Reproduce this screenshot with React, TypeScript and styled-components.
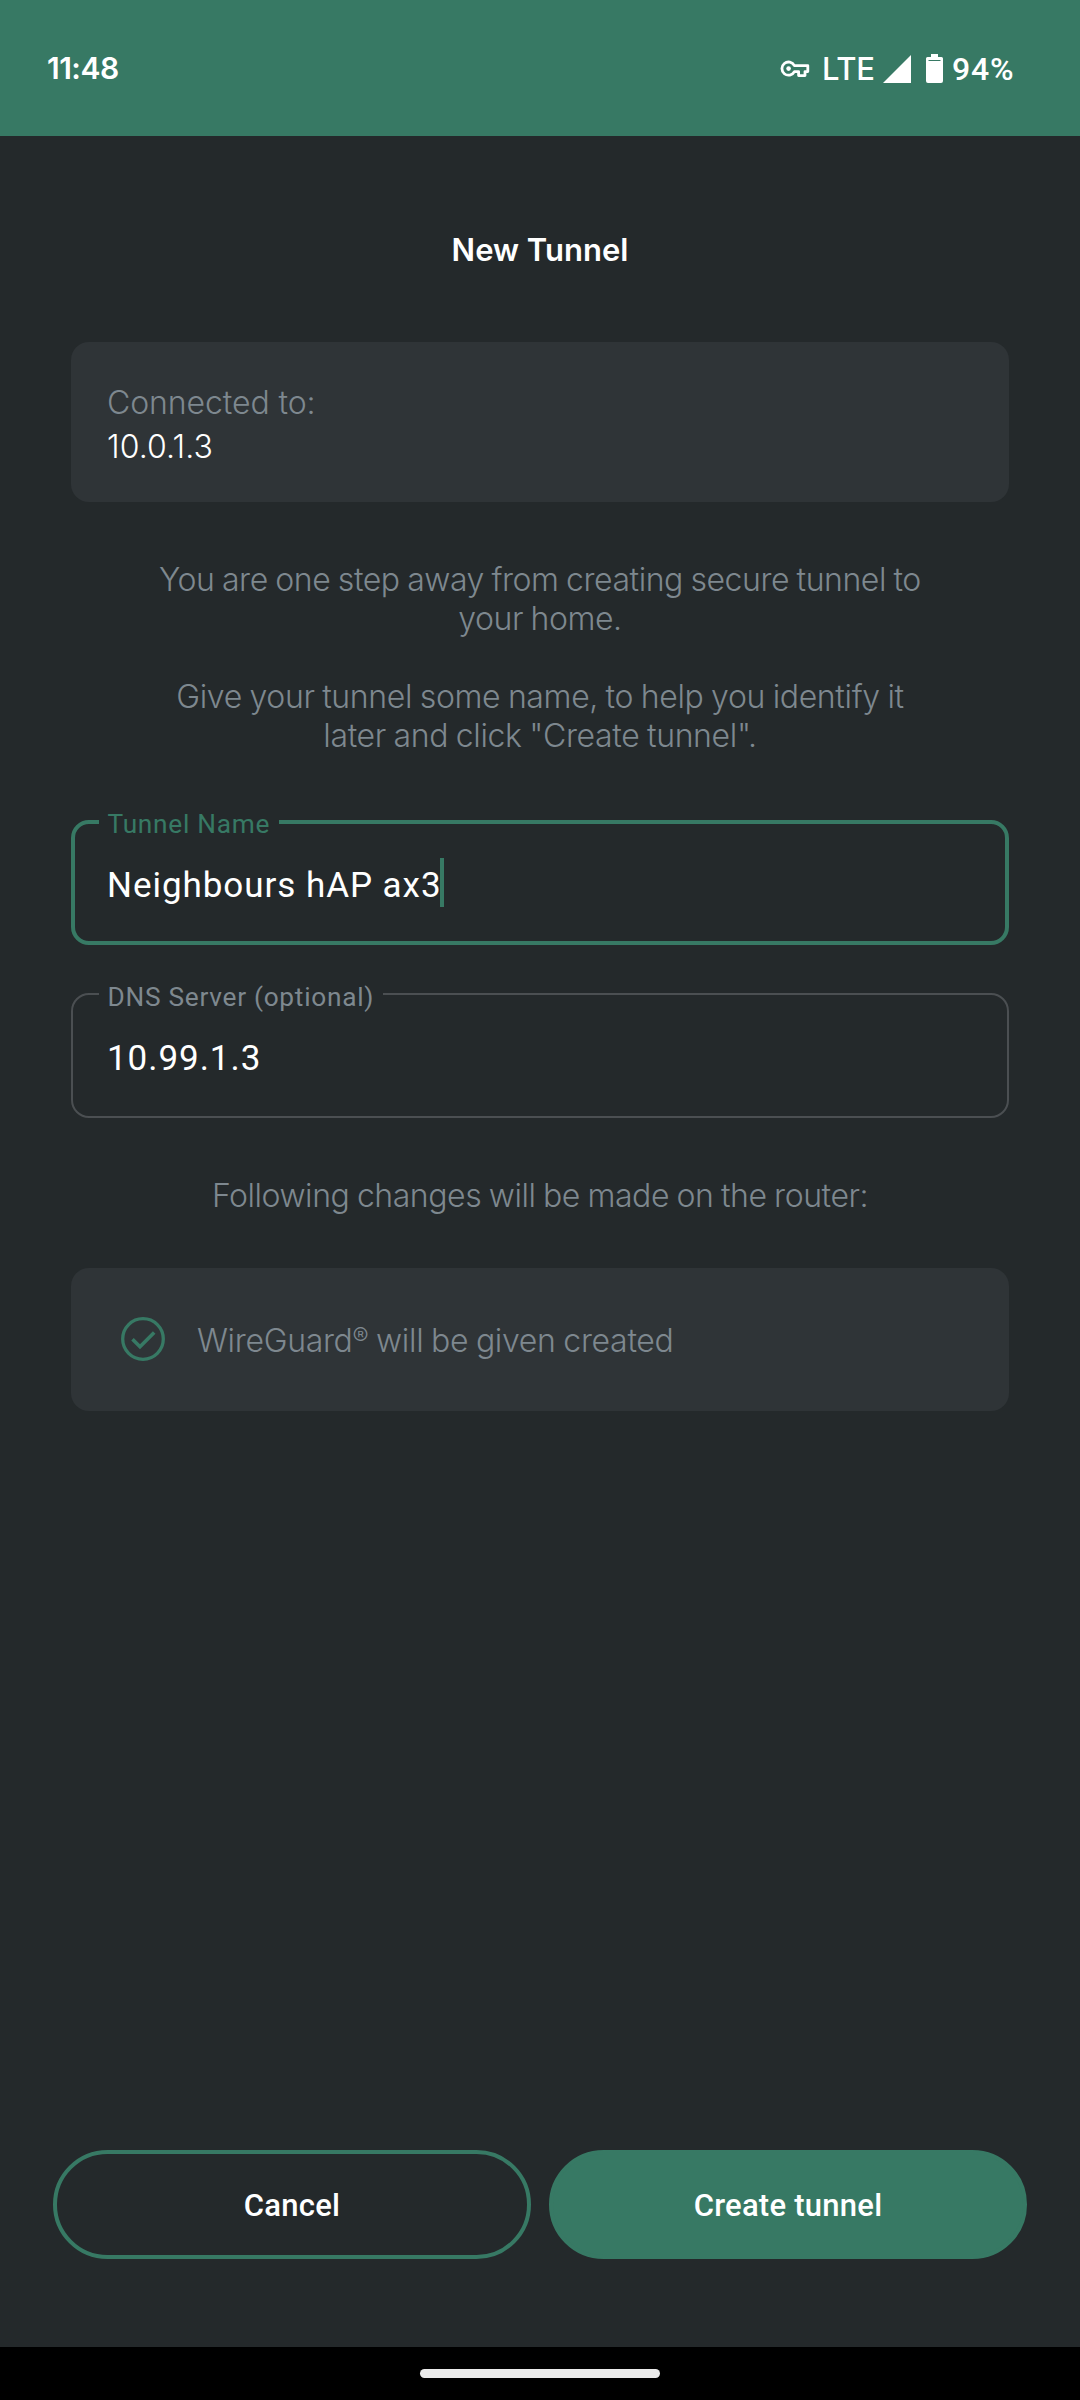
import React from "react";
import styled, { createGlobalStyle } from "styled-components";

const green = "#377964";
const surface = "#24292b";
const card = "#2f3437";
const muted = "#7e888f";

const GlobalStyle = createGlobalStyle`
  * { box-sizing: border-box; }
  body { margin: 0; background: ${surface}; }
`;

const Screen = styled.div`
  width: 1080px;
  height: 2400px;
  display: flex;
  flex-direction: column;
  background: ${surface};
  color: #fff;
  font-family: Inter, "Liberation Sans", sans-serif;
  overflow: hidden;
`;

const StatusBar = styled.header`
  height: 136px;
  padding: 48px 65px 0 47px;
  display: flex;
  justify-content: space-between;
  align-items: flex-start;
  background: ${green};
  line-height: 40px;
`;

const Clock = styled.span`
  font-size: 30px;
  font-weight: 560;
  letter-spacing: -0.5px;
`;

const StatusIcons = styled.div`
  display: flex;
  height: 40px;
  align-items: center;
`;

const KeySvg = styled.svg`
  width: 30px;
  height: 18px;
  margin: 2px 12px 0 0;
`;

const Network = styled.span`
  width: 51px;
  margin-right: 10px;
  padding-top: 1px;
  font-size: 31px;
  font-weight: 500;
  letter-spacing: -0.3px;
`;

const SignalSvg = styled.svg`
  width: 28px;
  height: 28px;
  margin-right: 15px;
  margin-top: 1px;
`;

const BatterySvg = styled.svg`
  width: 17px;
  height: 29px;
  margin-right: 9px;
  margin-top: 1px;
`;

const Percent = styled.span`
  width: 63px;
  padding-top: 1px;
  font-family: Roboto, sans-serif;
  font-size: 32px;
  font-weight: 500;
  letter-spacing: 0.8px;
`;

const Content = styled.main`
  flex: 1;
  display: flex;
  flex-direction: column;
  padding: 94px 71px 0;
`;

const Title = styled.h1`
  margin: 0 0 72px;
  font-size: 31px;
  font-weight: 600;
  line-height: 40px;
  text-align: center;
`;

const InfoCard = styled.section`
  height: 160px;
  padding: 39px 36px 0;
  border-radius: 18px;
  background: ${card};
`;

const InfoLine = styled.div<{ $muted?: boolean }>`
  font-size: 32px;
  font-weight: 350;
  line-height: 44px;
  letter-spacing: ${(p) => (p.$muted ? -0.1 : 0.1)}px;
  color: ${(p) => (p.$muted ? muted : "#fff")};
`;

const Copy = styled.p<{ $tracking?: number }>`
  margin: 0;
  font-size: 32px;
  font-weight: 350;
  line-height: 38.9px;
  letter-spacing: ${(p) => p.$tracking ?? -0.45}px;
  word-spacing: -1px;
  text-align: center;
  color: ${muted};
`;

const Registered = styled.span`
  position: relative;
  top: -7px;
  font-size: 24px;
  line-height: 1;
`;

const Intro = styled.div`
  display: flex;
  flex-direction: column;
  gap: 38.9px;
  margin: 59px 0 64.5px;
`;

const Field = styled.div<{ $active?: boolean }>`
  position: relative;
  height: 125px;
  display: flex;
  align-items: flex-start;
  padding: ${(p) => (p.$active ? "40px 32px" : "42px 34px")};
  border: ${(p) => (p.$active ? `4px solid ${green}` : "2px solid #4b4f52")};
  border-radius: 18px;
  font-family: Roboto, sans-serif;
`;

const FieldLabel = styled.label<{ $active?: boolean }>`
  position: absolute;
  top: ${(p) => (p.$active ? -15 : -13)}px;
  left: ${(p) => (p.$active ? 24 : 26)}px;
  padding: 0 8.5px;
  background: ${surface};
  color: ${(p) => (p.$active ? green : muted)};
  font-size: 26.25px;
  line-height: 30px;
  letter-spacing: 0.72px;
  white-space: nowrap;
`;

const FieldValue = styled.span`
  font-size: 35px;
  line-height: 44px;
  letter-spacing: 0.95px;
  white-space: nowrap;
`;

const Caret = styled.span`
  width: 4px;
  height: 49px;
  margin: -6px 0 0 -2px;
  background: ${green};
`;

const Fields = styled.div`
  display: flex;
  flex-direction: column;
  gap: 48px;
  margin-bottom: 59px;
`;

const ChangeCard = styled.section`
  height: 143px;
  margin-top: 52px;
  padding: 0 49.5px;
  display: flex;
  align-items: center;
  gap: 32.5px;
  border-radius: 18px;
  background: ${card};
`;

const ChangeText = styled(Copy)`
  padding-top: 5px;
`;

const CheckSvg = styled.svg`
  width: 44px;
  height: 44px;
`;

const Actions = styled.footer`
  height: 197px;
  padding: 0 53px;
  display: grid;
  grid-template-columns: 1fr 1fr;
  gap: 18px;
  align-items: start;
`;

const Button = styled.button<{ $filled?: boolean }>`
  height: 109px;
  padding: 2px 0 0;
  border: 4px solid ${green};
  border-radius: 55px;
  background: ${(p) => (p.$filled ? green : "transparent")};
  color: #fff;
  font: 500 31px/36px Roboto, sans-serif;
  letter-spacing: 0.25px;
`;

const NavBar = styled.div`
  height: 53px;
  display: flex;
  justify-content: center;
  padding-top: 22px;
  background: #000;
`;

const NavPill = styled.div`
  width: 240px;
  height: 9px;
  border-radius: 5px;
  background: #ebebeb;
`;

export default function App() {
  return (
    <>
      <GlobalStyle />
      <Screen>
        <StatusBar>
          <Clock>11:48</Clock>
          <StatusIcons>
            <KeySvg viewBox="0 0 30 18" fill="none" stroke="#fff">
              <path
                d="M14.4 5.6H27.8V11.6H25V15.6H18.6V11.6H14.4A6.6 6.6 0 1 1 14.4 5.6Z"
                strokeWidth="2.8"
                strokeLinejoin="round"
              />
              <circle cx="8.6" cy="8.6" r="2.3" fill="#fff" stroke="none" />
            </KeySvg>
            <Network>LTE</Network>
            <SignalSvg viewBox="0 0 28 28">
              <path d="M0 28L28 0V28Z" fill="#fff" />
            </SignalSvg>
            <BatterySvg viewBox="0 0 17 29">
              <path
                d="M5 0H12V3H15.5Q17 3 17 4.5V27Q17 29 15 29H2Q0 29 0 27V4.5Q0 3 1.5 3H5Z"
                fill="#fff"
              />
              <path d="M2.5 6.5H14.5" stroke={green} strokeWidth="1" />
            </BatterySvg>
            <Percent>94%</Percent>
          </StatusIcons>
        </StatusBar>

        <Content>
          <Title>New Tunnel</Title>
          <InfoCard>
            <InfoLine $muted>Connected to:</InfoLine>
            <InfoLine>10.0.1.3</InfoLine>
          </InfoCard>
          <Intro>
            <Copy>
              You are one step away from creating secure tunnel to
              <br />
              your home.
            </Copy>
            <Copy $tracking={-0.36}>
              Give your tunnel some name, to help you identify it
              <br />
              later and click "Create tunnel".
            </Copy>
          </Intro>
          <Fields>
            <Field $active>
              <FieldLabel $active>Tunnel Name</FieldLabel>
              <FieldValue>Neighbours hAP ax3</FieldValue>
              <Caret />
            </Field>
            <Field>
              <FieldLabel>DNS Server (optional)</FieldLabel>
              <FieldValue>10.99.1.3</FieldValue>
            </Field>
          </Fields>
          <Copy>Following changes will be made on the router:</Copy>
          <ChangeCard>
            <CheckSvg viewBox="0 0 44 44" fill="none" stroke={green}>
              <circle cx="22" cy="22" r="20.3" strokeWidth="3.3" />
              <path d="M11.5 22.3L19 29.8L33.2 15.6" strokeWidth="3.6" />
            </CheckSvg>
            <ChangeText $tracking={-0.31}>
              WireGuard<Registered>®</Registered> will be given created
            </ChangeText>
          </ChangeCard>
        </Content>

        <Actions>
          <Button>Cancel</Button>
          <Button $filled>Create tunnel</Button>
        </Actions>
        <NavBar>
          <NavPill />
        </NavBar>
      </Screen>
    </>
  );
}
